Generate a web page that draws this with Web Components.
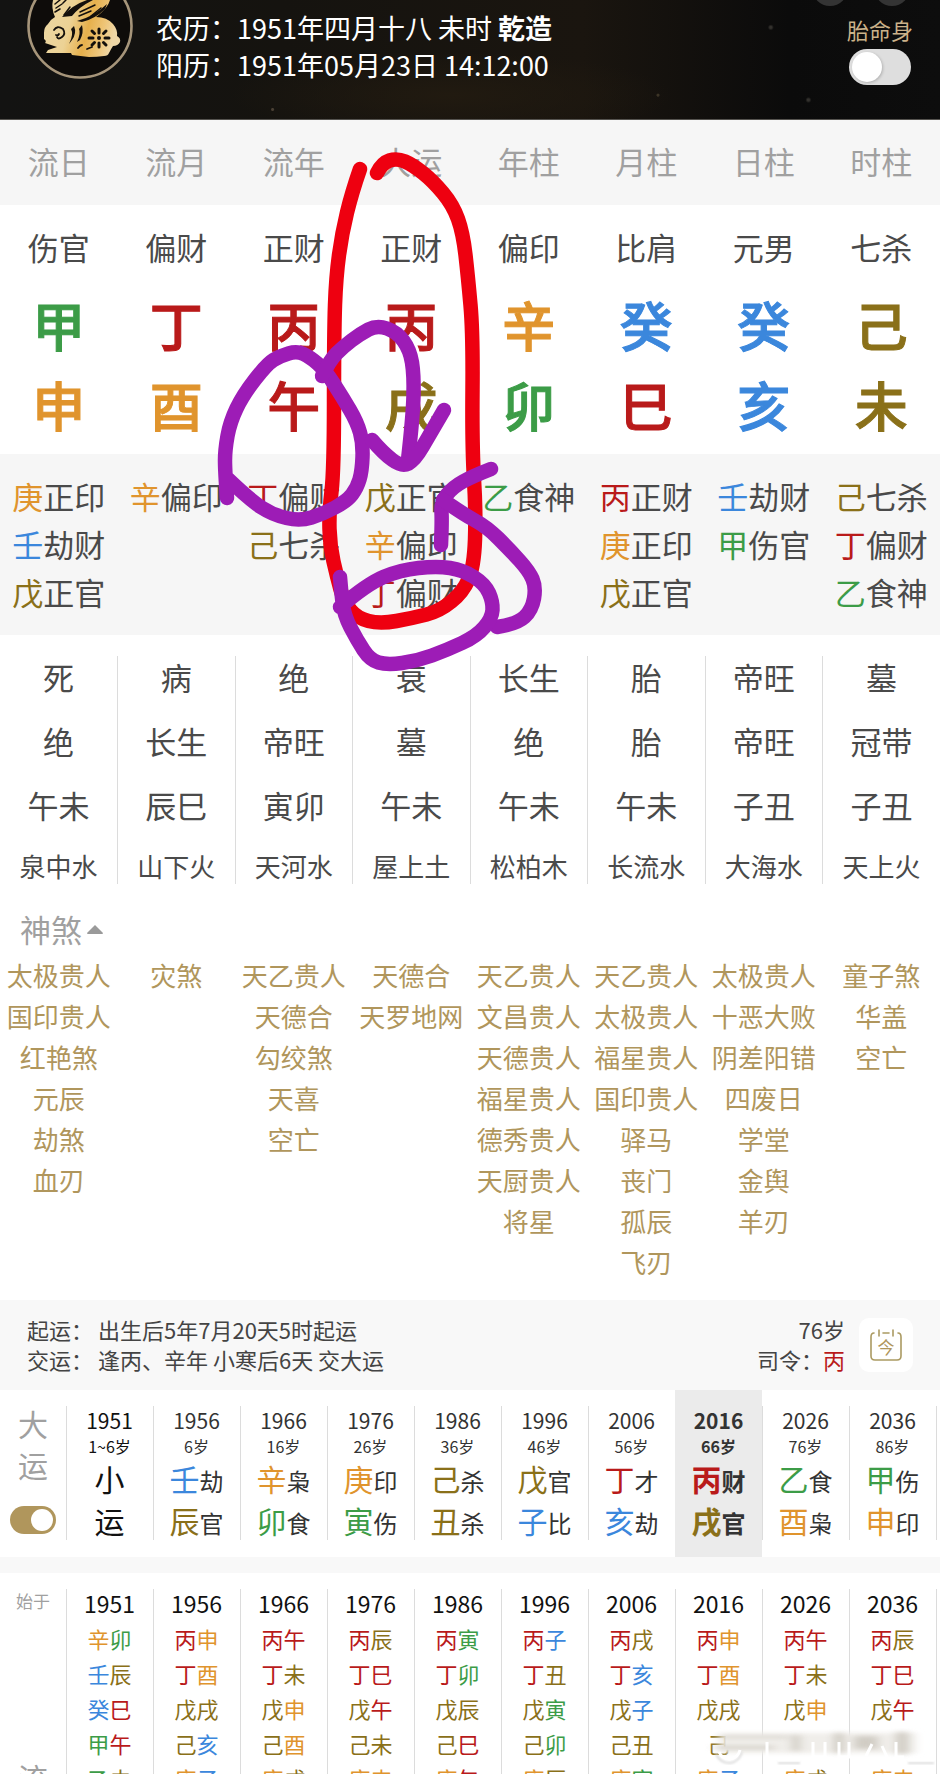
<!DOCTYPE html>
<html lang="zh-CN">
<head>
<meta charset="utf-8">
<meta name="viewport" content="width=device-width, initial-scale=1">
<title>八字排盘</title>
<style>
  html, body { margin: 0; height: 100%; }
  body {
    font-family: "Noto Sans CJK SC", sans-serif;
    color: #4a4a4a;
    background: #fff;
    --wood: #3c9c47; --fire: #b91a1a; --earth: #8a7019; --metal: #e0942d; --water: #3b87dc;
    --gold: #b0965c; --muted: #a0a0a0; --line: #dcdcdc; --band: #f6f6f6; --band-light: #f8f8f8;
  }
</style>
</head>
<body>
<bazi-app></bazi-app>

<script>
const ELEMENT_OF = {};
for (const [name, chars] of Object.entries({
  wood: '甲乙寅卯', fire: '丙丁巳午', earth: '戊己辰戌丑未', metal: '庚辛申酉', water: '壬癸子亥'
})) for (const c of chars) ELEMENT_OF[c] = name;

const tint = c => `<span class="${ELEMENT_OF[c] || ''}">${c}</span>`;

const COMMON = `
  * { box-sizing: border-box; }
  button { font: inherit; color: inherit; border: 0; background: none; padding: 0; margin: 0; cursor: pointer; }
  ul, ol { list-style: none; margin: 0; padding: 0; }
  .wood { color: var(--wood); } .fire { color: var(--fire); } .earth { color: var(--earth); }
  .metal { color: var(--metal); } .water { color: var(--water); }
`;

class BaseElement extends HTMLElement {
  constructor() {
    super();
    const t = document.createElement('template');
    t.innerHTML = `<style>${COMMON}${this.constructor.css}</style>${this.html()}`;
    this.attachShadow({ mode: 'open' }).append(t.content.cloneNode(true));
  }
}

/* Switch with a label passed in by the slot */
customElements.define('toggle-switch', class extends BaseElement {
  static css = `
    :host { display: block; }
    label { display: flex; flex-direction: column; align-items: center; cursor: pointer; }
    input { appearance: none; margin: 0; width: var(--w, 62px); height: var(--h, 36px);
      border-radius: 18px; background: #dedede; padding: 3px; display: flex; justify-content: flex-start; }
    input::before { content: ""; height: 100%; aspect-ratio: 1; border-radius: 50%; background: #fff; box-shadow: 1px 1px 3px #0003; }
    input:checked { background: var(--gold); justify-content: flex-end; }
    input:checked::before { box-shadow: none; }
  `;
  html() { return `<label><slot></slot><input type="checkbox" role="switch"></label>`; }
  connectedCallback() {
    const input = this.shadowRoot.querySelector('input');
    input.checked = this.hasAttribute('checked');
    if (this.getAttribute('label')) input.setAttribute('aria-label', this.getAttribute('label'));
  }
});

customElements.define('zodiac-badge', class extends BaseElement {
  static css = `:host { display: block; } svg { display: block; width: 106px; height: 79px; }`;
  html() { return `
    <svg viewBox="0 0 106 79" role="img" aria-label="兔">
      <defs><linearGradient id="g" x1="0" y1="0" x2="1" y2="0.2">
        <stop offset="0" stop-color="#ecd7a4"/><stop offset=".4" stop-color="#ecd295"/><stop offset=".65" stop-color="#e6b04c"/><stop offset=".85" stop-color="#eec578"/><stop offset="1" stop-color="#efd7a6"/>
      </linearGradient></defs>
      <circle cx="53" cy="26" r="51.5" fill="#0e0c0a" stroke="#a6957a" stroke-width="2.6"/>
      <path fill="url(#g)" d="M17 33 Q17 27 21 24 Q24 19 28 17 Q24 8 26 0 H83 Q81 8 69 17 Q80 17 86 24 Q91 30 90 36 Q94 38 93 42 Q91 46 86 46 Q84 49 82 53 Q81 56 77 56 Q70 57 62 57 L45 55 L44 53 H19 L21 50 L30 47 L18 43 Q20 41 17 39 Z"/>
      <g fill="#14100c">
        <path d="M35 17 Q45 5 60 0 H66 Q52 7 45 16 Z M50 21 Q66 17 80 4 L78 9 Q68 19 55 22 Z"/>
        <path d="M47 26 Q50 33 45 40 L42 44 Q47 34 44 29 Z M55 25 Q57 33 53 40 L50 42 Q54 33 52 29 Z"/>
      </g>
      <g fill="none" stroke="#14100c" stroke-linecap="round" stroke-width="1.8">
        <path d="M27 30 q3 -5 9 -1 q3 5 -1 8 q-4 3 -5 0 M29 35 q2 1 3 -1"/>
        <path stroke-width="1.5" d="M28 4 l5 -4 M29 8 l6 -4 M28 12 l5 -3 M36 3 l3 -3 M53 12 L68 5 M52 16 L64 11 M64 16 L74 8 M37 15 l6 -8"/>
        <path d="M51 48 q2 -3 4 -3 M60 49 l5 -2"/>
        <path stroke-width="3" d="M72 29 v4 M72 43 v4 M62 38 h4 M78 38 h4 M65 31 l2.500 2.500 M79 31 l-2.500 2.500 M65 45 l2.500 -2.500 M79 45 l-2.500 -2.500"/>
      </g>
      <circle cx="72" cy="38" r="2" fill="#14100c"/>
    </svg>`; }
});

customElements.define('chart-header', class extends BaseElement {
  static css = `
    :host { display: flex; justify-content: space-between; height: 120px; padding: 0 27px; overflow: hidden;
      color: #fff; border-bottom: 1px solid #55534f; position: relative;
      background:
        radial-gradient(circle at 29% 92%, #4a4034 0 1px, transparent 2px),
        radial-gradient(circle at 86% 84%, #33312d 0 1px, transparent 3px),
        radial-gradient(circle at 82% 23%, #33312d 0 1px, transparent 3px),
        radial-gradient(circle at 70% 80%, #3c3426 0 1px, transparent 2px),
        radial-gradient(ellipse at 48% 80%, #211a10 0, transparent 32%),
        linear-gradient(90deg, #131312 0, #15130f 30%, #1a150f 62%, #0b0b0b 84%, #0d0d0d 100%); }
    .who { display: flex; gap: 23px; }
    dl { margin: 0; padding-top: 9px; font-size: 27px; line-height: 37px; }
    dl div { display: flex; }
    dt, dd { margin: 0; white-space: pre; }
    .side { color: #cbb28a; font-size: 22px; line-height: 32px; padding-top: 13px; }
    toggle-switch span { padding-bottom: 4px; }
    .dots { position: absolute; top: -30px; right: 30px; display: flex; gap: 26px; }
    .dots button { width: 36px; height: 36px; border-radius: 50%; background: #343434; }
  `;
  html() { return `
    <div class="who">
      <zodiac-badge></zodiac-badge>
      <dl>
        <div><dt>农历：</dt><dd>1951年四月十八 未时 <b>乾造</b></dd></div>
        <div><dt>阳历：</dt><dd>1951年05月23日 14:12:00</dd></div>
      </dl>
    </div>
    <div class="side"><toggle-switch><span>胎命身</span></toggle-switch></div>
    <div class="dots"><button aria-label="分享"></button><button aria-label="更多"></button></div>`; }
});

const PILLARS = [
  ['流日', '伤官', '甲', '申', ['庚正印', '壬劫财', '戊正官'], ['死', '绝', '午未', '泉中水'], ['太极贵人', '国印贵人', '红艳煞', '元辰', '劫煞', '血刃']],
  ['流月', '偏财', '丁', '酉', ['辛偏印'], ['病', '长生', '辰巳', '山下火'], ['灾煞']],
  ['流年', '正财', '丙', '午', ['丁偏财', '己七杀'], ['绝', '帝旺', '寅卯', '天河水'], ['天乙贵人', '天德合', '勾绞煞', '天喜', '空亡']],
  ['大运', '正财', '丙', '戌', ['戊正官', '辛偏印', '丁偏财'], ['衰', '墓', '午未', '屋上土'], ['天德合', '天罗地网']],
  ['年柱', '偏印', '辛', '卯', ['乙食神'], ['长生', '绝', '午未', '松柏木'], ['天乙贵人', '文昌贵人', '天德贵人', '福星贵人', '德秀贵人', '天厨贵人', '将星']],
  ['月柱', '比肩', '癸', '巳', ['丙正财', '庚正印', '戊正官'], ['胎', '胎', '午未', '长流水'], ['天乙贵人', '太极贵人', '福星贵人', '国印贵人', '驿马', '丧门', '孤辰', '飞刃']],
  ['日柱', '元男', '癸', '亥', ['壬劫财', '甲伤官'], ['帝旺', '帝旺', '子丑', '大海水'], ['太极贵人', '十恶大败', '阴差阳错', '四废日', '学堂', '金舆', '羊刃']],
  ['时柱', '七杀', '己', '未', ['己七杀', '丁偏财', '乙食神'], ['墓', '冠带', '子丑', '天上火'], ['童子煞', '华盖', '空亡']]
];

customElements.define('pillar-table', class extends BaseElement {
  static css = `
    :host { display: block; font-size: 31px; }
    table { width: 100%; table-layout: fixed; border-collapse: collapse; text-align: center; }
    th, td { padding: 0; font-weight: 400; white-space: nowrap; }
    thead th { height: 85px; background: var(--band); color: var(--muted); line-height: 40px; padding-bottom: 4px; }
    .god td { height: 88px; line-height: 40px; padding-bottom: 4px; }
    .stem td, .branch td { font-size: 53px; line-height: 62px; font-weight: 500; -webkit-text-stroke: 1px; vertical-align: top; }
    .stem td { height: 80px; }
    .branch td { height: 81px; }
    .hidden td { height: 181px; background: var(--band); vertical-align: top; padding-top: 18px; line-height: 48px; }
    .stages { margin-top: 21px; }
    .stages td { height: 64px; line-height: 42px; vertical-align: top; }
    .stages td + td { border-left: 1px solid var(--line); }
    .stages tr:last-child td { height: 36px; line-height: 36px; font-size: 26px; }
  `;
  html() {
    const cells = (f, tag = 'td') => PILLARS.map(p => `<${tag}>${f(p)}</${tag}>`).join('');
    return `
      <table>
        <thead><tr>${cells(p => p[0], 'th')}</tr></thead>
        <tbody>
          <tr class="god">${cells(p => p[1])}</tr>
          <tr class="stem">${cells(p => tint(p[2]))}</tr>
          <tr class="branch">${cells(p => tint(p[3]))}</tr>
          <tr class="hidden">${cells(p => p[4].map(s => `<div>${tint(s[0])}${s.slice(1)}</div>`).join(''))}</tr>
        </tbody>
      </table>
      <table class="stages"><tbody>
        ${[0, 1, 2, 3].map(i => `<tr>${cells(p => p[5][i])}</tr>`).join('')}
      </tbody></table>`;
  }
});

/* Freehand pen strokes over the chart */
const RED = [
  [[360,169],[352,192],[342,233],[336,277],[334,333],[334,471],[329,512],[330,546],[337,577],[344,602],[357,618],[380,624],[413,618],[440,611],[463,592],[474,567],[476,512],[472,447],[473,333],[468,277],[463,233],[453,205],[433,181],[413,165],[397,158],[382,163],[377,173]]
];
const PURPLE = [
  [[227,498],[225,471],[225,450],[230,422],[243,395],[267,364],[280,356],[297,351],[310,357],[325,370],[343,398],[357,422],[363,443],[362,471],[357,488],[347,501],[323,514],[300,521],[273,515],[250,500],[227,478]],
  [[322,376],[330,360],[343,347],[360,334],[377,325],[397,332],[410,350],[414,375],[413,416],[408,460]],
  [[372,440],[383,453],[402,467],[415,460],[430,434],[444,410]],
  [[491,469],[473,476],[453,487],[441,502],[442,522],[441,545]],
  [[443,500],[463,514],[487,527],[510,550],[529,571],[536,587],[532,610],[517,624],[497,627]],
  [[340,577],[341,590],[344,615],[357,640],[370,660],[387,665],[417,661],[447,650],[477,636],[492,618],[493,602],[485,584],[463,570],[437,566],[400,570],[367,584],[340,607]]
];
const smooth = pts => {
  let d = `M${pts[0]}`;
  for (let i = 1; i < pts.length - 1; i++) {
    const [x, y] = pts[i], [nx, ny] = pts[i + 1];
    d += i < pts.length - 2 ? ` Q${x} ${y} ${(x + nx) / 2} ${(y + ny) / 2}` : ` Q${x} ${y} ${nx} ${ny}`;
  }
  return d;
};
customElements.define('pen-marks', class extends BaseElement {
  static css = `
    :host { position: absolute; inset: 0 0 auto 0; pointer-events: none; }
    svg { display: block; width: 100%; }
    path { fill: none; stroke-width: 14.5; stroke-linecap: round; stroke-linejoin: round; }
  `;
  html() { return `<svg viewBox="0 0 940 700" aria-hidden="true">
    ${RED.map(p => `<path stroke="#ee0010" d="${smooth(p)}"/>`).join('')}
    ${PURPLE.map(p => `<path stroke="#9d1cb6" d="${smooth(p)}"/>`).join('')}
  </svg>`; }
});

customElements.define('spirit-list', class extends BaseElement {
  static css = `
    :host { display: block; padding: 23px 0 18px; }
    button { display: flex; align-items: center; gap: 5px; margin-left: 20px; font-size: 31px; line-height: 44px; color: var(--muted); }
    svg { width: 16px; height: 9px; }
    .grid { display: grid; grid-template-columns: repeat(8, 1fr); padding-top: 3px; color: var(--gold); font-size: 26px; line-height: 41px; text-align: center; white-space: nowrap; }
  `;
  html() { return `
    <button aria-expanded="true">神煞<svg viewBox="0 0 16 9" aria-hidden="true"><path fill="#9a9a9a" d="M8 0 L16 8 Q16 9 15 9 H1 Q0 9 0 8 Z"/></svg></button>
    <div class="grid">${PILLARS.map(p => `<ul>${p[6].map(s => `<li>${s}</li>`).join('')}</ul>`).join('')}</div>`; }
});

customElements.define('luck-summary', class extends BaseElement {
  static css = `
    :host { display: flex; align-items: center; gap: 14px; height: 90px; padding: 0 27px; background: var(--band-light); font-size: 22px; line-height: 30px; color: #444; }
    p { margin: 0; white-space: pre; }
    .start, .age { padding-bottom: 2px; }
    .start { flex: 1; }
    .start p { display: flex; gap: 5px; }
    .age { text-align: right; }
    button { width: 54px; height: 54px; border-radius: 10px; background: #fff; display: grid; place-items: center; color: var(--gold); }
    .cal { display: grid; place-items: center; width: 32px; height: 32px; font-size: 17px; line-height: 20px; position: relative; padding-top: 3px; }
    svg { position: absolute; inset: 0; }
  `;
  html() { return `
    <div class="start">
      <p><span>起运：</span><span>出生后5年7月20天5时起运</span></p>
      <p><span>交运：</span><span>逢丙、辛年 小寒后6天 交大运</span></p>
    </div>
    <div class="age"><p>76岁</p><p>司令：<span class="fire">丙</span></p></div>
    <button aria-label="今天"><span class="cal"><svg viewBox="0 0 32 32" fill="none" stroke="#ab9a62" stroke-width="1.6" stroke-linecap="round" aria-hidden="true"><path d="M4 4 Q1 4 1 8 V27 Q1 31 5 31 H27 Q31 31 31 27 V8 Q31 4 28 4 M9 1 V7 M23 1 V7 M13 4 H19"/></svg>今</span></button>`; }
});

const CYCLES = [
  ['1951', '1~6岁', '小', '运', ['辛卯', '壬辰', '癸巳', '甲午', '乙未']],
  ['1956', '6岁', '壬劫', '辰官', ['丙申', '丁酉', '戊戌', '己亥', '庚子']],
  ['1966', '16岁', '辛枭', '卯食', ['丙午', '丁未', '戊申', '己酉', '庚戌']],
  ['1976', '26岁', '庚印', '寅伤', ['丙辰', '丁巳', '戊午', '己未', '庚申']],
  ['1986', '36岁', '己杀', '丑杀', ['丙寅', '丁卯', '戊辰', '己巳', '庚午']],
  ['1996', '46岁', '戊官', '子比', ['丙子', '丁丑', '戊寅', '己卯', '庚辰']],
  ['2006', '56岁', '丁才', '亥劫', ['丙戌', '丁亥', '戊子', '己丑', '庚寅']],
  ['2016', '66岁', '丙财', '戌官', ['丙申', '丁酉', '戊戌', '己\u3000', '庚子']],
  ['2026', '76岁', '乙食', '酉枭', ['丙午', '丁未', '戊申', '\u3000', '庚戌']],
  ['2036', '86岁', '甲伤', '申印', ['丙辰', '丁巳', '戊午', '\u3000', '庚申']]
];

const RAIL = `
  :host { display: grid; grid-template-columns: 66px 1fr; padding-right: 3px; }
  .rail { display: flex; flex-direction: column; align-items: center; color: var(--muted); }
  .cols { display: grid; grid-template-columns: repeat(10, 1fr); padding-right: 1px;
    background: linear-gradient(var(--line), var(--line)) 100% 16px / 1px var(--rule) no-repeat; }
  .col { background: linear-gradient(var(--line), var(--line)) 0 16px / 1px var(--rule) no-repeat; text-align: center; white-space: nowrap; }
`;

customElements.define('luck-cycles', class extends BaseElement {
  static css = RAIL + `
    :host { --rule: 134px; height: 167px; }
    .rail { font-size: 30px; line-height: 41px; padding-top: 13px; }
    toggle-switch { padding-top: 21px; --w: 46px; --h: 28px; }
    .col { display: flex; flex-direction: column; align-items: center; padding-top: 17px; color: #333; }
    .col:first-child { color: #111; }
    .year { font-size: 21px; line-height: 26px; }
    .age { font-size: 16px; line-height: 26px; }
    .pair { display: flex; align-items: baseline; font-size: 24px; line-height: 42px; height: 42px; color: #333; }
    .pair span { font-size: 30px; line-height: 38px; }
    .col:first-child .pair { color: #111; }
    .col.on { background: #ebebeb; font-weight: 700; }
  `;
  html() { return `
    <div class="rail"><span>大</span><span>运</span><toggle-switch checked label="大运"></toggle-switch></div>
    <div class="cols">${CYCLES.map(c => `
      <button class="col${c[0] === '2016' ? ' on' : ''}">
        <span class="year">${c[0]}</span><span class="age">${c[1]}</span>
        <div class="pair">${tint(c[2][0])}${c[2].slice(1)}</div>
        <div class="pair">${tint(c[3][0])}${c[3].slice(1)}</div>
      </button>`).join('')}</div>`; }
});

customElements.define('year-grid', class extends BaseElement {
  static css = RAIL + `
    :host { --rule: 100%; border-top: 16px solid var(--band-light); }
    .rail { font-size: 17px; line-height: 24px; padding-top: 16px; }
    .rail strong { font-size: 30px; line-height: 41px; font-weight: 400; padding-top: 144px; }
    .col { padding-top: 15px; font-size: 22px; line-height: 35px; }
    .year { color: #111; font-size: 23px; line-height: 30px; padding-bottom: 3px; }
    li { height: 35px; }
  `;
  html() { return `
    <div class="rail"><span>始于</span><strong>流</strong></div>
    <div class="cols">${CYCLES.map(c => `
      <div class="col"><div class="year">${c[0]}</div>
        <ul>${c[4].map(p => `<li>${[...p].map(tint).join('')}</li>`).join('')}</ul>
      </div>`).join('')}</div>`; }
});

/* Blurred stamp in the bottom right corner */
customElements.define('corner-stamp', class extends BaseElement {
  static css = `
    :host { position: absolute; right: 0; bottom: 0; width: 236px; height: 46px; pointer-events: none; }
    svg { display: block; width: 100%; height: 100%; }
  `;
  html() { return `
    <svg viewBox="0 0 236 46" aria-hidden="true">
      <defs><filter id="s" x="-10%" y="-50%" width="120%" height="200%"><feGaussianBlur stdDeviation="5 2"/></filter>
      <filter id="t"><feGaussianBlur stdDeviation="0.8"/></filter></defs>
      <rect x="16" y="5" width="196" height="20" fill="#f0eeea" filter="url(#s)"/>
      <g fill="#c4bfb5" filter="url(#s)" opacity=".7"><rect x="14" y="8" width="70" height="2"/><rect x="10" y="18" width="60" height="3"/><rect x="88" y="7" width="8" height="16"/><rect x="130" y="5" width="10" height="20"/><rect x="150" y="8" width="24" height="13"/><rect x="192" y="4" width="12" height="22"/></g>
      <g fill="none" stroke="#dcdcdc" stroke-width="2" filter="url(#t)"><path d="M12 26 Q16 35 26 35 Q35 34 38 24 M74 35 h22 M204 35 h26"/></g>
      <g fill="none" stroke="#fff" stroke-width="3"><path d="M15 24 Q18 31 26 31 Q34 30 36 22 M63 14 v15 M74 32 h22 M109 14 v15 h12 v-15 M135 14 v15 h10 v-15 M162 28 l6 -12 M178 18 l5 11 M192 14 v15 h8 M204 32 h26"/></g>
    </svg>`; }
});

customElements.define('bazi-app', class extends BaseElement {
  static css = `
    :host { display: block; position: relative; height: 100vh; overflow: hidden; background: #fff; }
    main { height: 100%; overflow-y: auto; scrollbar-width: none; position: relative; }
  `;
  html() { return `
    <main>
      <chart-header></chart-header>
      <pillar-table></pillar-table>
      <spirit-list></spirit-list>
      <luck-summary></luck-summary>
      <luck-cycles></luck-cycles>
      <year-grid></year-grid>
      <pen-marks></pen-marks>
    </main>
    <corner-stamp></corner-stamp>`; }
});
</script>
</body>
</html>
